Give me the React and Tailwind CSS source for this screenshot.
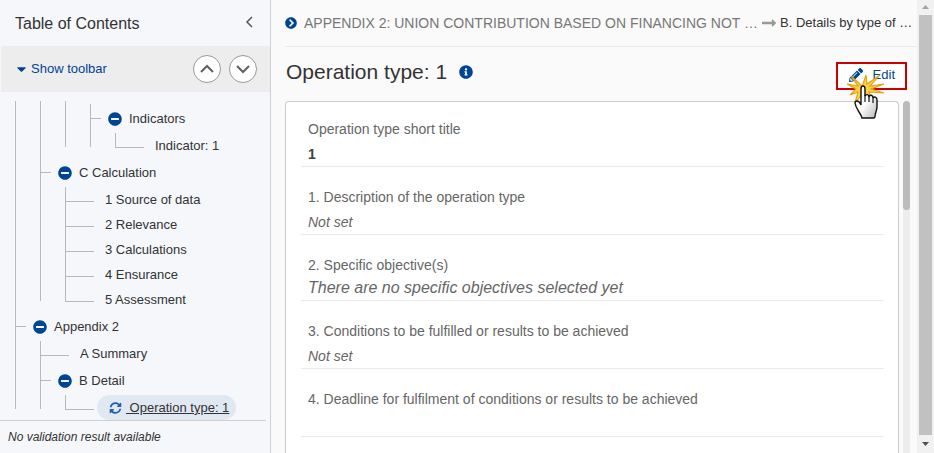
import React from 'react';
import {
    FaMinusCircle,
    FaSyncAlt,
    FaChevronCircleRight,
    FaInfoCircle,
    FaLongArrowAltRight,
    FaPencilAlt,
    FaCaretDown,
} from 'react-icons/fa';

// guides: one entry per outer level, "line" runs the full row, "end" stops at the elbow
const treeRows = [
    { label: 'Indicators', guides: ['line', 'line', 'line'], parent: true, more: true },
    { label: 'Indicator: 1', guides: ['line', 'line', 'end', 'end'] },
    { label: 'C Calculation', guides: ['line'], parent: true, more: true },
    { label: '1 Source of data', guides: ['line', 'line'], more: true },
    { label: '2 Relevance', guides: ['line', 'line'], more: true },
    { label: '3 Calculations', guides: ['line', 'line'], more: true },
    { label: '4 Ensurance', guides: ['line', 'line'], more: true },
    { label: '5 Assessment', guides: ['line', 'end'] },
    { label: 'Appendix 2', guides: [], parent: true, more: true },
    { label: 'A Summary', guides: ['line'], more: true },
    { label: 'B Detail', guides: ['line'], parent: true, more: true },
    { label: 'Operation type: 1', guides: ['end', 'end'], active: true },
];

const sections = [
    { label: 'Operation type short title', value: '1', style: 'text-sm font-bold text-[#404040] mt-[5px]' },
    { label: '1. Description of the operation type', value: 'Not set', style: 'text-sm italic mt-[5px]' },
    { label: '2. Specific objective(s)', value: 'There are no specific objectives selected yet', style: 'text-base italic mt-[3px]' },
    { label: '3. Conditions to be fulfilled or results to be achieved', value: 'Not set', style: 'text-sm italic mt-[5px]' },
    { label: '4. Deadline for fulfilment of conditions or results to be achieved', value: '', style: 'text-sm mt-[5px]' },
];

const Chevron = ({ points, className }) => (
    <svg className={className} viewBox="0 0 16 16" fill="none" stroke="currentColor">
        <polyline points={points} />
    </svg>
);

const ClickHand = () => (
    <svg className="absolute left-[7px] top-[10px] w-[44px] h-[48px] pointer-events-none" viewBox="0 0 44 48">
        <defs>
            <linearGradient id="hand" x1="0" y1="0" x2="1" y2="1">
                <stop offset="0.5" stopColor="#ffffff" />
                <stop offset="1" stopColor="#b5b5b5" />
            </linearGradient>
        </defs>
        <path
            d="M19 14 L8 4 L15 14 L4 12 L13 17 L7 23 L15 20 L12 31 L20 21 L29 28 L26 20 L41 21 L28 17 L41 12 L27 14 L37 3 L24 12 L23 3 L20 12 Z"
            fill="#fbd04a"
            stroke="#e5a00d"
            strokeWidth="1.1"
        />
        <path
            d="M18 33 V17 C18 13 22 13 22 17 V24 C23 22 26 22 26 25 C27 22 30 23 30 26 C31 24 34 25 34 28 V35 C34 39 32 40 32 45 L31 46 H19 C18 41 13 38 12 31 C12 28 16 28 18 33 Z"
            fill="url(#hand)"
            stroke="#111"
            strokeWidth="1.4"
        />
        <path d="M22 23 V30 M26 24 V30 M30 26 V31" stroke="#111" strokeWidth="1.2" />
    </svg>
);

const TreeRow = ({ row }) => (
    <li className={`flex pl-[15px] ${row.parent ? 'h-[29px]' : 'h-[25px]'}`}>
        {row.guides.map((guide, i) => (
            <span key={i} className={`w-[25px] border-l border-[#b9b9b9] ${guide === 'line' ? 'h-full' : 'h-[14px]'}`}></span>
        ))}
        <span className={`border-l border-[#b9b9b9] ${row.more ? 'h-full' : 'h-[15px]'} ${row.parent ? 'w-[18px]' : row.active ? 'w-8' : 'w-10'}`}>
            <span className={`block h-[15px] border-b border-[#b9b9b9] ${row.parent ? 'w-[10px]' : 'w-7'}`}></span>
        </span>
        <a
            href="#"
            className={`flex items-center text-[13px] ${row.active ? 'bg-[#e0e8f2] rounded-full pl-3 pr-[7px] underline' : ''}`}
        >
            {row.parent && <FaMinusCircle className="w-[14px] h-[14px] mr-[7px] text-[#004494]" />}
            {row.active && <FaSyncAlt className="w-[13px] h-3 mr-1 text-[#2a5fa8]" />}
            {row.active ? `\u00a0${row.label}` : row.label}
        </a>
    </li>
);

const Sidebar = () => (
    <aside className="w-[271px] shrink-0 flex flex-col bg-[#f5f7fb] border-r border-[#cfcfcf]">
        <div className="h-[46px] flex items-center justify-between pl-[15px] pr-[13px] pt-[2px]">
            <h2 className="text-base">Table of Contents</h2>
            <button aria-label="Collapse" className="text-[#555] pb-1">
                <Chevron points="11,3 6,8 11,13" className="w-4 h-4 stroke-[1.5]" />
            </button>
        </div>
        <div className="h-[46px] flex items-center justify-between bg-[#ededed] ml-px pl-4 pr-[13px]">
            <button className="flex items-center text-[13px] text-[#004494]">
                <FaCaretDown className="w-[9px] h-4 mr-[5px]" />
                Show toolbar
            </button>
            <div className="flex gap-2 text-[#606060]">
                <button aria-label="Previous" className="w-7 h-7 rounded-full bg-white border border-[#999] flex items-center justify-center">
                    <Chevron points="2,11 8,5 14,11" className="w-4 h-4 stroke-2" />
                </button>
                <button aria-label="Next" className="w-7 h-7 rounded-full bg-white border border-[#999] flex items-center justify-center">
                    <Chevron points="2,5 8,11 14,5" className="w-4 h-4 stroke-2" />
                </button>
            </div>
        </div>
        <ul className="flex-1 min-h-0 pt-[9px] overflow-hidden">
            <li aria-hidden="true" className="flex h-[3px] pl-[15px]">
                <span className="w-[25px] border-l border-[#b9b9b9]"></span>
                <span className="w-[25px] border-l border-[#b9b9b9]"></span>
                <span className="w-[25px] border-l border-[#b9b9b9]"></span>
            </li>
            {treeRows.map((row) => (
                <TreeRow key={row.label} row={row} />
            ))}
        </ul>
        <p className="h-[33px] mr-1 pl-2 flex items-center border-t border-[#cfcfcf] text-xs italic">
            No validation result available
        </p>
    </aside>
);

const Content = () => (
    <main className="flex-1 min-w-0 flex flex-col bg-[#fafafa] pl-[14px]">
        <nav className="h-[47px] shrink-0 flex items-center border-b border-[#ebebeb] text-sm whitespace-nowrap pr-1">
            <FaChevronCircleRight className="w-3 h-3 mr-[7px] shrink-0 text-[#004494]" />
            <a href="#" className="text-[#777]">APPENDIX 2: UNION CONTRIBUTION BASED ON FINANCING NOT …</a>
            <FaLongArrowAltRight className="w-[14px] h-4 mx-1 shrink-0 text-[#999]" />
            <a href="#" className="text-[13px]">B. Details by type of …</a>
        </nav>
        <div className="h-[54px] shrink-0 flex items-end justify-between pl-px pr-[10px] pb-[11px]">
            <h1 className="flex items-center text-[21px] leading-9">
                Operation type: 1
                <FaInfoCircle className="w-[14px] h-[14px] ml-3 text-[#004494]" />
            </h1>
            <div className="relative">
                <button className="w-[71px] h-7 flex items-center justify-between pl-[11px] pr-[10px] pb-[2px] bg-white border-2 border-[#cc0000] text-[13px] text-[#004494]">
                    <FaPencilAlt className="w-[14px] h-[14px]" />
                    Edit
                </button>
                <ClickHand />
            </div>
        </div>
        <div className="flex-1 min-h-0 flex pr-[7px]">
            <div className="flex-1 min-w-0 overflow-hidden bg-white border border-b-0 border-[#ccc] rounded-t-sm pl-[15px] pr-[14px] pt-[17px] flex flex-col gap-5">
                {sections.map((section) => (
                    <section key={section.label} className="shrink-0 border-b border-[#ebebeb] px-[7px] pb-[2px] text-[#666]">
                        <h3 className="text-sm leading-5">{section.label}</h3>
                        <p className={`h-5 leading-5 ${section.style}`}>{section.value}</p>
                    </section>
                ))}
            </div>
            <div className="w-[7px] ml-1 bg-[#ededed] rounded-t">
                <div className="h-[109px] bg-[#bbb] rounded"></div>
            </div>
        </div>
    </main>
);

const PageScrollbar = () => (
    <div className="w-[17px] shrink-0 flex flex-col items-center bg-[#f1f1f1]">
        <svg className="w-[17px] h-[15px]" viewBox="0 0 17 15"><path d="M5 9 L8.5 5 L12 9 Z" fill="#a3a3a3" /></svg>
        <div className="w-[13px] flex-1 bg-[#c1c1c1]"></div>
        <svg className="w-[17px] h-[18px]" viewBox="0 0 17 18"><path d="M5 7 L8.5 11 L12 7 Z" fill="#505050" /></svg>
    </div>
);

const App = () => (
    <div className="h-screen flex overflow-hidden text-[#333] font-['Liberation_Sans',Arial,sans-serif]">
        <Sidebar />
        <Content />
        <PageScrollbar />
    </div>
);

export default App;
